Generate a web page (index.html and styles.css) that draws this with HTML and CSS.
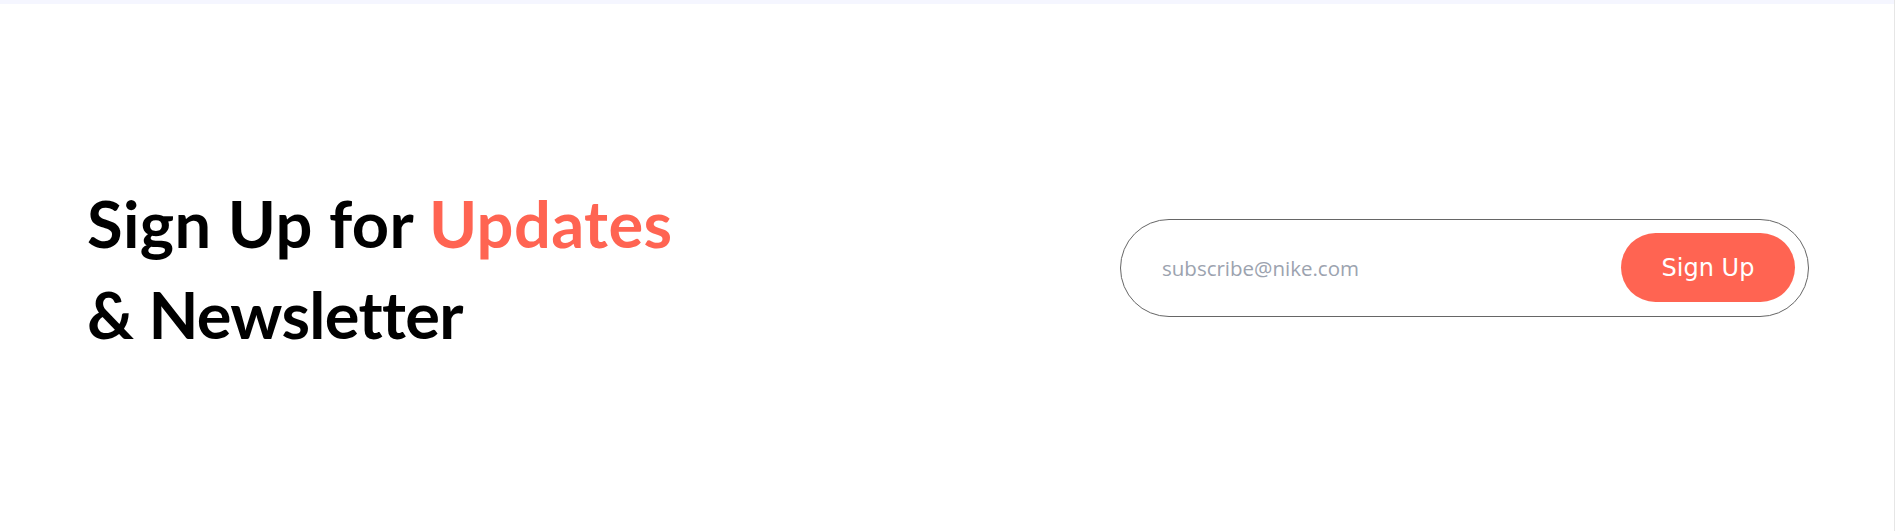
FILE: index.html
```html
<!DOCTYPE html>
<html lang="en">
<head>
<meta charset="utf-8">
<title>Sign Up for Updates</title>
<link rel="stylesheet" href="styles.css">
</head>
<body>
<div class="page">
  <div class="topband"></div>
  <section class="subscribe">
    <h3 class="heading">Sign Up for <span class="accent">Updates</span><br><span class="line-two">&amp; Newsletter</span></h3>
    <form class="form" onsubmit="return false">
      <input class="input" type="email" placeholder="subscribe@nike.com">
      <button class="button" type="submit">Sign Up</button>
    </form>
  </section>
</div>
</body>
</html>
```

FILE: styles.css
```css
html, body {
  margin: 0;
  padding: 0;
  background: #ffffff;
}

.page {
  width: 1894px;
  height: 531px;
  border-right: 1px solid #e6e6e6;
  display: flex;
  flex-direction: column;
}

.topband {
  height: 4px;
  background: #f5f6ff;
  flex: none;
}

.subscribe {
  flex: 1;
  display: flex;
  align-items: center;
  justify-content: space-between;
  padding: 0 85px 0 87px;
}

.heading {
  margin: 0;
  font-family: "Lato", "Open Sans", sans-serif;
  font-weight: 700;
  font-size: 65px;
  line-height: 91px;
  color: #000000;
  letter-spacing: 0.4px;
  padding-top: 3px;
}

.accent {
  color: #ff6452;
}

.line-two {
  letter-spacing: -0.7px;
}

.form {
  width: 689px;
  height: 98px;
  box-sizing: border-box;
  border: 1px solid #666666;
  border-radius: 49px;
  padding: 13px;
  display: flex;
  align-items: center;
  margin: 0;
}

.input {
  flex: 1;
  min-width: 0;
  border: none;
  outline: none;
  background: transparent;
  padding: 0 0 0 28px;
  font-family: "Open Sans", "Noto Sans", sans-serif;
  font-size: 20.5px;
  color: #52525b;
}

.input::placeholder {
  color: #9ca3af;
}

.button {
  width: 174px;
  height: 69px;
  border: none;
  border-radius: 35px;
  background: #ff6452;
  color: #ffffff;
  font-family: "DejaVu Sans", sans-serif;
  font-size: 24px;
  font-weight: 400;
  padding: 0;
  cursor: pointer;
}
```
